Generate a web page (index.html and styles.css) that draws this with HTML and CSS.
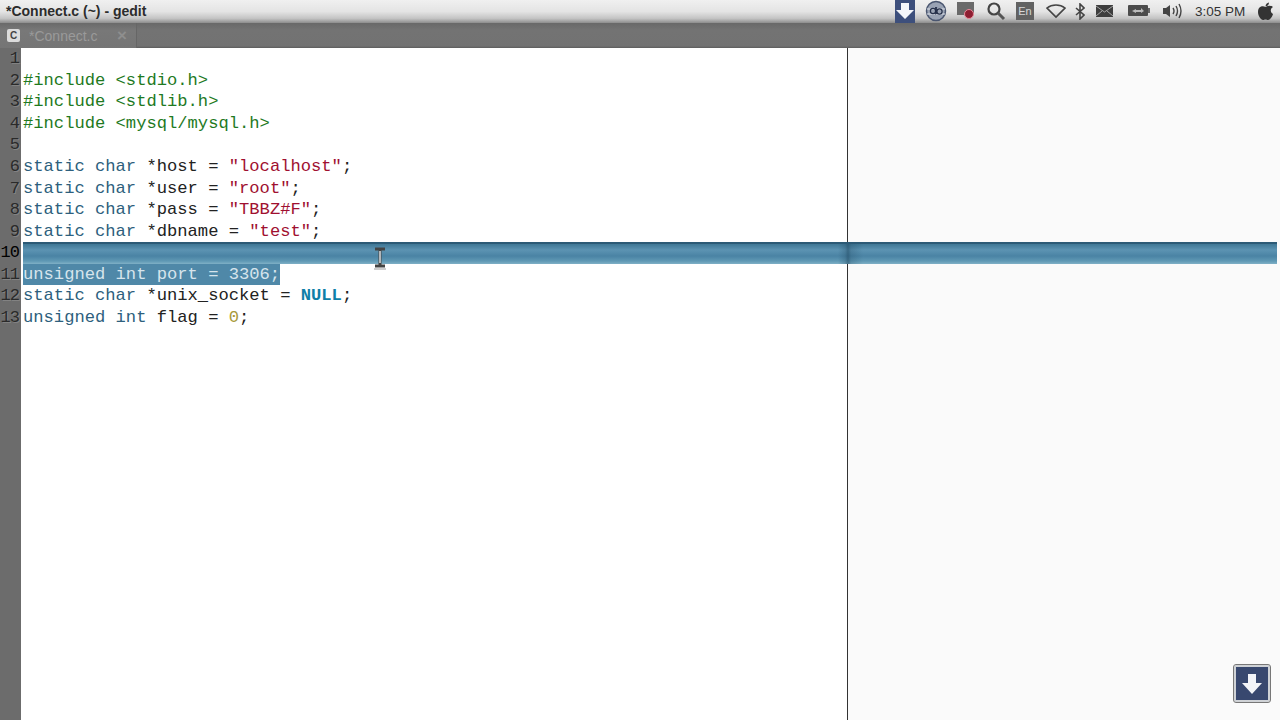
FILE: index.html
```html
<!DOCTYPE html>
<html lang="en">
<head>
<meta charset="utf-8">
<title>*Connect.c (~) - gedit</title>
<link rel="stylesheet" href="styles.css">
</head>
<body>
<div class="app">
  <header class="topbar">
    <div class="win-title">*Connect.c (~) - gedit</div>
    <div class="tray">
      <span class="tray-item dl"><svg width="20" height="22" viewBox="0 0 20 22"><path d="M6 3h8v7h5l-9 9-9-9h5z" fill="#f4f6fa"/></svg></span>
      <span class="tray-item qb"><svg width="22" height="22" viewBox="0 0 22 22"><circle cx="11" cy="11" r="9.5" fill="#9aa3b4" stroke="#4a5670" stroke-width="1.5"/><path d="M2 9h18M2 14h18" stroke="#dfe3ea" stroke-width="1"/><circle cx="8" cy="11" r="2.6" fill="none" stroke="#26304a" stroke-width="1.2"/><path d="M10.6 7v7.5M11.6 7v7" stroke="#26304a" stroke-width="1"/><circle cx="14.5" cy="11.5" r="2.6" fill="none" stroke="#26304a" stroke-width="1.2"/></svg></span>
      <span class="tray-item rec"><svg width="20" height="20" viewBox="0 0 20 20"><rect x="0" y="1" width="17" height="13" fill="#6a6a6a"/><circle cx="12" cy="13" r="4.5" fill="#8e1f32" stroke="#e88a9a" stroke-width="1"/></svg></span>
      <span class="tray-item search"><svg width="20" height="20" viewBox="0 0 20 20"><circle cx="8" cy="8" r="5.5" fill="none" stroke="#444" stroke-width="2.2"/><path d="M12 12l6 6" stroke="#555" stroke-width="3"/></svg></span>
      <span class="tray-item lang">En</span>
      <span class="tray-item wifi"><svg width="20" height="16" viewBox="0 0 20 16"><path d="M1 5C6 1 14 1 19 5l-9 9z" fill="none" stroke="#444" stroke-width="1.6"/></svg></span>
      <span class="tray-item bt"><svg width="10" height="17" viewBox="0 0 10 17"><path d="M1 5l8 7-4 4V1l4 4-8 7" fill="none" stroke="#444" stroke-width="1.6"/></svg></span>
      <span class="tray-item mail"><svg width="17" height="12" viewBox="0 0 17 12"><rect width="17" height="12" fill="#3e3e3e"/><path d="M0 1l8.500 6L17 1M0 11l6-5M17 11l-6-5" stroke="#a5a5a5" stroke-width="1" fill="none"/></svg></span>
      <span class="tray-item batt"><svg width="22" height="12" viewBox="0 0 22 12"><rect width="20" height="11" rx="1" fill="#4c4c4c"/><rect x="20" y="3" width="2" height="5" fill="#666"/><path d="M4 6l4-2v1h5V3l3 3-3 2V7H8v1z" fill="#bbb"/></svg></span>
      <span class="tray-item vol"><svg width="20" height="18" viewBox="0 0 20 18"><path d="M1 6h3l4-3v12l-4-3H1z" fill="#444"/><path d="M11 6q2 3 0 6M14 4q3 5 0 10M17 2q4 7 0 14" fill="none" stroke="#444" stroke-width="1.4"/></svg></span>
      <span class="tray-clock">3:05 PM</span>
      <span class="tray-item apple"><svg width="17" height="19" viewBox="0 0 17 19"><path d="M8.500 5C6 3.500 1 4 1 10c0 4 3 8 5 8 1 0 1.500-.6 2.500-.6s1.500.6 2.500.6c2 0 4.500-3.500 5-6-3-1.500-3-5.500 0-7-2-2-5-1.500-7.500 0z" fill="#333"/><path d="M8.500 4.500C8.500 2.500 10 .8 12 .5c0 2-1.500 3.700-3.500 4z" fill="#333"/></svg></span>
    </div>
  </header>

  <nav class="tabbar">
    <div class="tab">
      <span class="tab-icon">C</span>
      <span class="tab-label">*Connect.c</span>
      <span class="tab-close">×</span>
    </div>
  </nav>

  <main class="editor">
    <div class="gutter">
      <div class="num">1</div><div class="num">2</div><div class="num">3</div><div class="num">4</div><div class="num">5</div><div class="num">6</div><div class="num">7</div><div class="num">8</div><div class="num">9</div><div class="num cur">10</div><div class="num">11</div><div class="num">12</div><div class="num">13</div>
    </div>
    <div class="code">
      <div class="margin-line"></div>
      <div class="line">&nbsp;</div>
      <div class="line pre">#include &lt;stdio.h&gt;</div>
      <div class="line pre">#include &lt;stdlib.h&gt;</div>
      <div class="line pre">#include &lt;mysql/mysql.h&gt;</div>
      <div class="line">&nbsp;</div>
      <div class="line"><span class="ty">static char</span> *host = <span class="str">"localhost"</span>;</div>
      <div class="line"><span class="ty">static char</span> *user = <span class="str">"root"</span>;</div>
      <div class="line"><span class="ty">static char</span> *pass = <span class="str">"TBBZ#F"</span>;</div>
      <div class="line"><span class="ty">static char</span> *dbname = <span class="str">"test"</span>;</div>
      <div class="line sel-full">&nbsp;</div>
      <div class="line"><span class="sel">unsigned int port = 3306;</span></div>
      <div class="line"><span class="ty">static char</span> *unix_socket = <span class="kw">NULL</span>;</div>
      <div class="line"><span class="ty">unsigned int</span> flag = <span class="numlit">0</span>;</div>
      <svg class="ibeam" width="16" height="24" viewBox="0 0 16 24"><path d="M3 3h10M8 3v16M3 20h10" stroke="#444" stroke-width="3" fill="none"/><path d="M8 5v12" stroke="#d8dde0" stroke-width="1.500"/><path d="M2 23h12" stroke="#999" stroke-width="1"/></svg>
    </div>
  </main>

  <div class="float-btn"><svg width="24" height="26" viewBox="0 0 24 26"><path d="M8 3h8v9h6L12 23 2 12h6z" fill="#f2f4f8"/></svg></div>
</div>
</body>
</html>
```
FILE: styles.css
```css
* { box-sizing: border-box; }
html, body { margin: 0; padding: 0; }
body { width: 1280px; height: 720px; overflow: hidden; background: #fff; }

.app { position: relative; width: 1280px; height: 720px; display: flex; flex-direction: column; }

.topbar {
  height: 23px;
  flex: none;
  display: flex;
  align-items: center;
  justify-content: space-between;
  padding: 0 6px 1px 6px;
  background: linear-gradient(#f0f0f0 0, #e4e4e4 50%, #c4c4c4 80%, #8c8c8c 100%);
}
.win-title { font: bold 14px "Liberation Sans", Arial, sans-serif; color: #2c2c2c; }
.tray { display: flex; align-items: center; height: 23px; }
.tray-item { display: flex; align-items: center; justify-content: center; flex: none; }
.dl { width: 20px; height: 23px; background: #3d4f7c; margin-right: 10px; }
.qb { width: 22px; margin-right: 10px; }
.rec { width: 20px; margin-right: 9px; }
.search { width: 20px; margin-right: 10px; }
.lang { width: 18px; height: 18px; background: #626262; color: #d8d8d8; font: 11px "Liberation Sans", Arial, sans-serif; margin-right: 12px; }
.wifi { width: 20px; margin-right: 9px; }
.bt { width: 10px; margin-right: 11px; }
.mail { width: 17px; margin-right: 15px; }
.batt { width: 22px; margin-right: 12px; }
.vol { width: 20px; margin-right: 13px; }
.tray-clock { font: 13.5px "Liberation Sans", Arial, sans-serif; color: #333; width: 50px; white-space: nowrap; margin-right: 12px; }
.apple { width: 17px; }

.tabbar {
  height: 25px;
  flex: none;
  background: linear-gradient(#686868, #737373 30%, #727272 92%, #5c5c5c);
  display: flex;
}
.tab {
  width: 137px;
  display: flex;
  align-items: center;
  padding-left: 7px;
  border-right: 1px solid #666;
  background: linear-gradient(#6a6a6a, #787878 30%, #757575);
}
.tab-icon {
  width: 13px; height: 13px;
  background: #dcdcdc;
  border-radius: 2px;
  color: #444;
  font: bold 10px/13px "Liberation Sans", Arial, sans-serif;
  text-align: center;
}
.tab-label { margin-left: 9px; width: 88px; font: 14px "Liberation Sans", Arial, sans-serif; color: #9a9a9a; }
.tab-close { font: bold 17px "Liberation Sans", Arial, sans-serif; color: #8e8e8e; }

.editor { flex: 1; display: flex; min-height: 0; }

.gutter { width: 21px; flex: none; background: #6c6c6c; padding-top: .3px; }
.num {
  height: 21.55px;
  font: 17px/21.55px "Liberation Mono", monospace;
  letter-spacing: -1px;
  text-align: right;
  padding-right: 2px;
  color: #2a2a2a;
  text-shadow: 1px 1px 0 rgba(255, 255, 255, .18);
}
.num.cur { color: #000; text-shadow: none; }

.code {
  position: relative;
  flex: 1;
  padding-left: 2px;
  padding-top: .3px;
  background: linear-gradient(90deg, #fff 826px, #fafafa 826px);
  font: 17.15px/21.55px "Liberation Mono", monospace;
  color: #222;
}
.margin-line { position: absolute; left: 826px; top: 0; bottom: 0; width: 1px; background: #333; }
.line { height: 21.55px; white-space: pre; position: relative; }
.pre { color: #1f7a1f; }
.ty { color: #2e5f7d; }
.str { color: #a01030; }
.kw { color: #0f7fa8; font-weight: bold; }
.numlit { color: #a89a3a; }
.sel-full {
  margin-right: 3px;
  border-top: 2px solid #2c5a76;
  background:
    linear-gradient(90deg, transparent 815px, rgba(30, 70, 95, .25) 822px, rgba(30, 70, 95, .55) 825px, rgba(30, 70, 95, .25) 828px, transparent 840px),
    linear-gradient(#3f7795, #5c93b2 30%, #4a83a4 60%, #5f98b4 85%, #7fb0c6);
}
.sel { background: #4f88a8; color: #d6e4ec; display: inline-block; height: 21.55px; }
.ibeam { position: absolute; left: 351px; top: 198px; }

.float-btn {
  position: absolute;
  left: 1234px;
  top: 665px;
  width: 36px;
  height: 37px;
  background: #38486f;
  border: 2px solid #cfd2d6;
  outline: 1px solid #777;
  border-radius: 2px;
  display: flex;
  align-items: center;
  justify-content: center;
}
```
